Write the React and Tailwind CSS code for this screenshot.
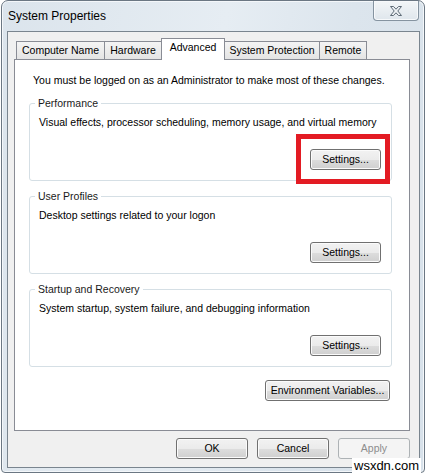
const tabs = [
  { label: "Computer Name", width: "w-[89px]" },
  { label: "Hardware", width: "w-[58px]" },
  { label: "Advanced", width: "w-[64px]", active: true },
  { label: "System Protection", width: "w-[96px]" },
  { label: "Remote", width: "w-[48px]" },
];

const groups = [
  { title: "Performance", text: "Visual effects, processor scheduling, memory usage, and virtual memory" },
  { title: "User Profiles", text: "Desktop settings related to your logon" },
  { title: "Startup and Recovery", text: "System startup, system failure, and debugging information" },
];

function Button({ children, className = "", disabled }) {
  return (
    <button
      disabled={disabled}
      className={`flex h-[21px] items-center justify-center rounded-[3px] border leading-none ${
        disabled
          ? "border-[#adb2b5] bg-[#f4f4f4] text-[#8d8d8d]"
          : "border-[#707070] bg-[linear-gradient(#f2f2f2_0%,#ebebeb_50%,#dddddd_51%,#cfcfcf_100%)] text-black shadow-[inset_0_0_0_1px_#fbfbfb]"
      } ${className}`}
    >
      {children}
    </button>
  );
}

function CloseGlyph() {
  return (
    <svg width="14" height="12" viewBox="0 0 14 12">
      <path
        d="M1.5 1.5H4.5L7 4.2L9.5 1.5H12.5L8.8 6L12.5 10.5H9.5L7 7.8L4.5 10.5H1.5L5.2 6Z"
        fill="#eef2f5"
        stroke="#5d6a76"
        strokeWidth="1"
        strokeLinejoin="round"
      />
    </svg>
  );
}

function Group({ title, text }) {
  return (
    <fieldset className="rounded-[3px] border border-[#d5dfe5] pl-[9px] pr-[10px] pb-[10px]">
      <legend className="-ml-[4px] px-[3px] leading-[14px] text-[#1a1a1a]">{title}</legend>
      <p className="mt-[5px] leading-[14px]">{text}</p>
      <div className="mt-[20px] flex justify-end">
        <Button className="w-[71px]">Settings...</Button>
      </div>
    </fieldset>
  );
}

export default function App() {
  return (
    <div className="relative h-[476px] w-[428px] overflow-hidden bg-white font-['Liberation_Sans',Arial,sans-serif] text-[10.5px] text-black">
      <div className="ml-[1px] flex h-[473px] w-[424px] flex-col rounded-t-[7px] rounded-b-[4px] border border-[#6b7783] bg-[linear-gradient(100deg,#dbe4ec_0%,#e6edf3_45%,#dce5ed_70%,#d7e1ea_100%)] shadow-[inset_0_0_0_1px_#f4f7fa]">
        <div className="flex h-[30px] items-start justify-between">
          <span className="pl-[6px] text-[12px] leading-[30px] text-black">System Properties</span>
          <div className="mr-[5px] flex h-[20px] w-[46px] items-center justify-center rounded-b-[4px] border border-t-0 border-[#8593a0] bg-[linear-gradient(#f3f6f8,#dfe6ec)] shadow-[inset_0_0_0_1px_#f7f9fb]">
            <CloseGlyph />
          </div>
        </div>

        <div className="ml-[5px] flex h-[437px] w-[413px] flex-col border border-[#7a858f] bg-[#f0f0f0] pl-[6px] pt-[6px]">
          <div className="flex h-[21px] items-end pl-[2px]">
            {tabs.map((tab, i) => (
              <div
                key={tab.label}
                className={`${tab.width} ${i > 0 ? "-ml-px" : ""} flex items-center justify-center border border-b-0 border-[#898c95] whitespace-nowrap ${
                  tab.active
                    ? "relative z-10 -mb-px h-[22px] bg-white pb-[3px]"
                    : "h-[18px] bg-[linear-gradient(#f4f4f4,#e4e4e4)] pt-[1px]"
                }`}
              >
                {tab.label}
              </div>
            ))}
          </div>

          <div className="h-[372px] w-[396px] border border-[#898c95] bg-white">
            <p className="mt-[13px] pl-[18px] leading-[14px]">
              You must be logged on as an Administrator to make most of these changes.
            </p>
            <div className="ml-[14px] mt-[9px] flex w-[363px] flex-col gap-[8px]">
              {groups.map((g) => (
                <Group key={g.title} {...g} />
              ))}
            </div>
            <div className="ml-[14px] mt-[13px] flex w-[363px] justify-end pr-[2px]">
              <Button className="w-[125px]">Environment Variables...</Button>
            </div>
          </div>

          <div className="mt-[7px] flex w-[396px] justify-end gap-[9px]">
            <Button className="w-[72px]">OK</Button>
            <Button className="w-[72px]">Cancel</Button>
            <Button className="w-[72px]" disabled>
              Apply
            </Button>
          </div>
        </div>
      </div>

      {/* highlight around the Performance settings button */}
      <div className="absolute left-[296px] top-[134px] h-[50px] w-[94px] border-[5px] border-[#e31b23]" />

      <div className="absolute left-[352px] top-[458px] bg-white px-[2px] text-[13px] leading-[15px] text-black">
        wsxdn.com
      </div>
    </div>
  );
}
